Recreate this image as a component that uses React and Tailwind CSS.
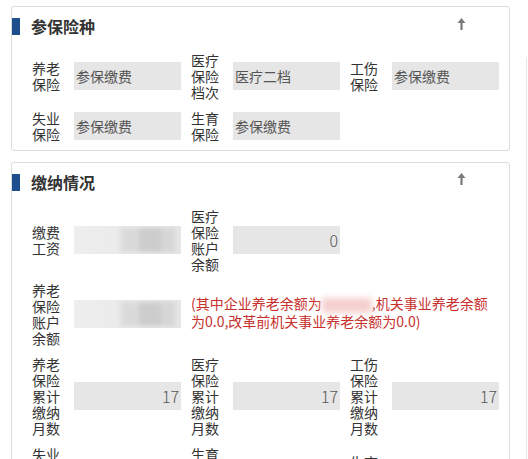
const font = { fontFamily: '"Microsoft YaHei", "Noto Sans CJK SC", "Noto Sans", sans-serif' }

function UpArrow() {
  return (
    <svg width="9" height="14" viewBox="0 0 9 14" className="shrink-0">
      <path d="M4.5 1 L8.5 6 L5.6 6 L5.6 13 L3.4 13 L3.4 6 L0.5 6 Z" fill="#7a7a7a" />
    </svg>
  )
}

function CardHeader({ title, arrowTop }) {
  return (
    <div className="flex items-start pt-[11px]">
      <div className="w-[8px] h-[17px] bg-[#1d4f8f]" />
      <h2 className="ml-[11px] text-[16px] leading-[17px] font-bold text-[#333]">{title}</h2>
      <div className={`ml-auto mr-[43px] ${arrowTop}`}>
        <UpArrow />
      </div>
    </div>
  )
}

function Label({ text }) {
  return (
    <div className="w-[29px] mr-[13px] shrink-0 text-[14px] leading-[16px] text-[#333] break-all">
      {text}
    </div>
  )
}

function Field({ label, value, align = 'left', number = false }) {
  return (
    <div className="flex items-center">
      <Label text={label} />
      <div
        className={`flex-1 h-[28px] bg-[#e6e6e6] flex items-center px-[2px] text-[#555] ${
          align === 'right' ? 'justify-end' : ''
        } ${number ? 'text-[16px] font-light' : 'text-[14px]'}`}
      >
        {value}
      </div>
    </div>
  )
}

// masked amount: soft grey blocks over the input
function MaskedField({ label }) {
  return (
    <div className="flex items-center">
      <Label text={label} />
      <div className="flex-1 h-[28px] bg-gradient-to-r from-[#eeeeee] to-[#e6e6e6] flex items-center justify-end pr-[6px] overflow-hidden">
        <div className="flex blur-[2px]">
          <div className="w-[18px] h-[24px] bg-[#dadada]" />
          <div className="w-[22px] h-[24px] bg-[#cdcdcd]" />
          <div className="w-[14px] h-[24px] bg-[#d6d6d6]" />
        </div>
      </div>
    </div>
  )
}

export default function App() {
  return (
    <div className="relative min-h-screen bg-white pt-[6px] pl-[11px] pr-[18px] overflow-hidden" style={font}>

      {/* faint outer frame on the right */}
      <div className="absolute right-[1px] top-[57px] bottom-0 w-px bg-[#e6e6e6]" />

      {/* Insurance types */}
      <section className="border border-[#dcdcdc] rounded-[3px] bg-white">
        <CardHeader title="参保险种" arrowTop="-mt-[1px]" />
        <div className="mt-[17px] pl-[20px] pr-[10px] pb-[8px] grid grid-cols-3 gap-x-[10px] gap-y-[10px] items-center">
          <Field label="养老保险" value="参保缴费" />
          <Field label="医疗保险档次" value="医疗二档" />
          <Field label="工伤保险" value="参保缴费" />
          <Field label="失业保险" value="参保缴费" />
          <Field label="生育保险" value="参保缴费" />
        </div>
      </section>

      {/* Payment status */}
      <section className="mt-[11px] border border-[#dcdcdc] rounded-[3px] bg-white">
        <CardHeader title="缴纳情况" arrowTop="-mt-[2px]" />
        <div className="mt-[17px] pl-[20px] pr-[10px] pb-[8px] grid grid-cols-3 gap-x-[10px] gap-y-[10px] items-center">
          <MaskedField label="缴费工资" />
          <Field label="医疗保险账户余额" value="0" align="right" number />
          <div />

          <MaskedField label="养老保险账户余额" />
          <p className="col-span-2 text-[14px] leading-[17px] text-[#c8302c] -mt-[3px]">
            (其中企业养老余额为
            <span className="inline-block align-middle w-[50px] h-[15px] bg-[#f6cfcf] blur-[3px]" />
            ,机关事业养老余额
            <br />
            为0.0,改革前机关事业养老余额为0.0)
          </p>

          <Field label="养老保险累计缴纳月数" value="17" align="right" number />
          <Field label="医疗保险累计缴纳月数" value="17" align="right" number />
          <Field label="工伤保险累计缴纳月数" value="17" align="right" number />

          <Field label="失业保险累计缴纳月数" value="17" align="right" number />
          <Field label="生育保险累计缴纳月数" value="17" align="right" number />
          <Field label="生育保险账户余额" value="0" align="right" number />
        </div>
      </section>
    </div>
  )
}
